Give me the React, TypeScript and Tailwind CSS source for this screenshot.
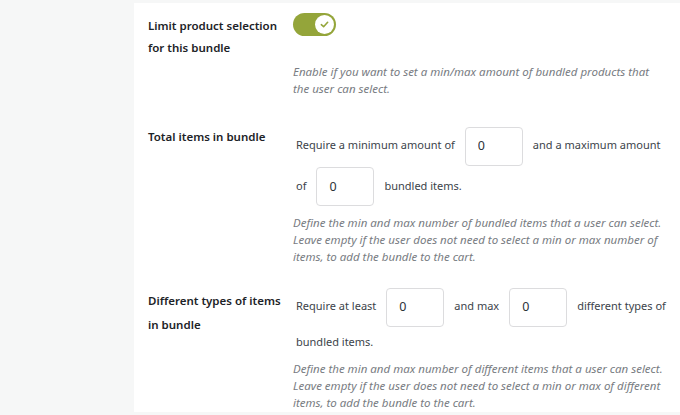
import { type FC } from "react";

const NumberInput: FC = () => (
  <input
    type="text"
    defaultValue="0"
    className="mx-[10px] inline-block h-[39px] w-[58px] rounded-[4px] border border-[#dcdcde] bg-white px-[12px] align-middle text-[12.5px] text-[#2c3338] outline-none"
  />
);

const Toggle: FC = () => (
  <div className="flex h-[23px] w-[43px] items-center justify-end rounded-full bg-[#94a53a] pr-[2px]">
    <div className="flex h-[19px] w-[19px] items-center justify-center rounded-full bg-white">
      <svg width="9" height="9" viewBox="0 0 10 10" fill="none">
        <path d="M1.5 5.2 L4 7.5 L8.5 2.5" stroke="#94a53a" strokeWidth="1.8" strokeLinecap="round" strokeLinejoin="round" />
      </svg>
    </div>
  </div>
);

const Help: FC<{ children: React.ReactNode; className?: string }> = ({ children, className = "" }) => (
  <p className={`text-[11.5px] italic leading-[17px] text-[#787c82] ${className}`}>{children}</p>
);

export default function App() {
  return (
    <div
      className="min-h-screen bg-[#f6f7f7] pt-[3px] pl-[134px]"
      style={{ fontFamily: '"Noto Sans", "Open Sans", sans-serif' }}
    >
      <div className="h-[409px] bg-white pl-[14px] pr-[14px] pt-[10px]">
        {/* Limit selection */}
        <div className="flex items-start">
          <div className="w-[145px] pt-[2px] text-[11.5px] font-semibold leading-[22px] text-[#1d2327]">
            Limit product selection
            <br />
            for this bundle
          </div>
          <div className="flex-1">
            <Toggle />
            <Help className="mt-[27px]">
              Enable if you want to set a min/max amount of bundled products that
              <br />
              the user can select.
            </Help>
          </div>
        </div>

        {/* Total items */}
        <div className="mt-[28px] flex items-start">
          <div className="w-[145px] pt-[1px] text-[11.5px] font-semibold leading-[22px] text-[#1d2327]">
            Total items in bundle
          </div>
          <div className="flex-1">
            <div className="pl-[3px] text-[11px] leading-[40px] text-[#3c434a]">
              Require a minimum amount of
              <NumberInput />
              and a maximum amount
              <br />
              of
              <NumberInput />
              bundled items.
            </div>
            <Help className="mt-[8px]">
              Define the min and max number of bundled items that a user can select.
              <br />
              Leave empty if the user does not need to select a min or max number of
              <br />
              items, to add the bundle to the cart.
            </Help>
          </div>
        </div>

        {/* Different types */}
        <div className="mt-[21px] flex items-start">
          <div className="w-[145px] pt-[3px] text-[11.5px] font-semibold leading-[24px] text-[#1d2327]">
            Different types of items
            <br />
            in bundle
          </div>
          <div className="flex-1">
            <div className="pl-[3px] text-[11px] leading-[40px] text-[#3c434a]">
              Require at least
              <NumberInput />
              and max
              <NumberInput />
              different types of
            </div>
            <div className="pl-[3px] text-[11px] leading-[30px] text-[#3c434a]">bundled items.</div>
            <Help className="mt-[3px]">
              Define the min and max number of different items that a user can select.
              <br />
              Leave empty if the user does not need to select a min or max of different
              <br />
              items, to add the bundle to the cart.
            </Help>
          </div>
        </div>
      </div>
    </div>
  );
}
